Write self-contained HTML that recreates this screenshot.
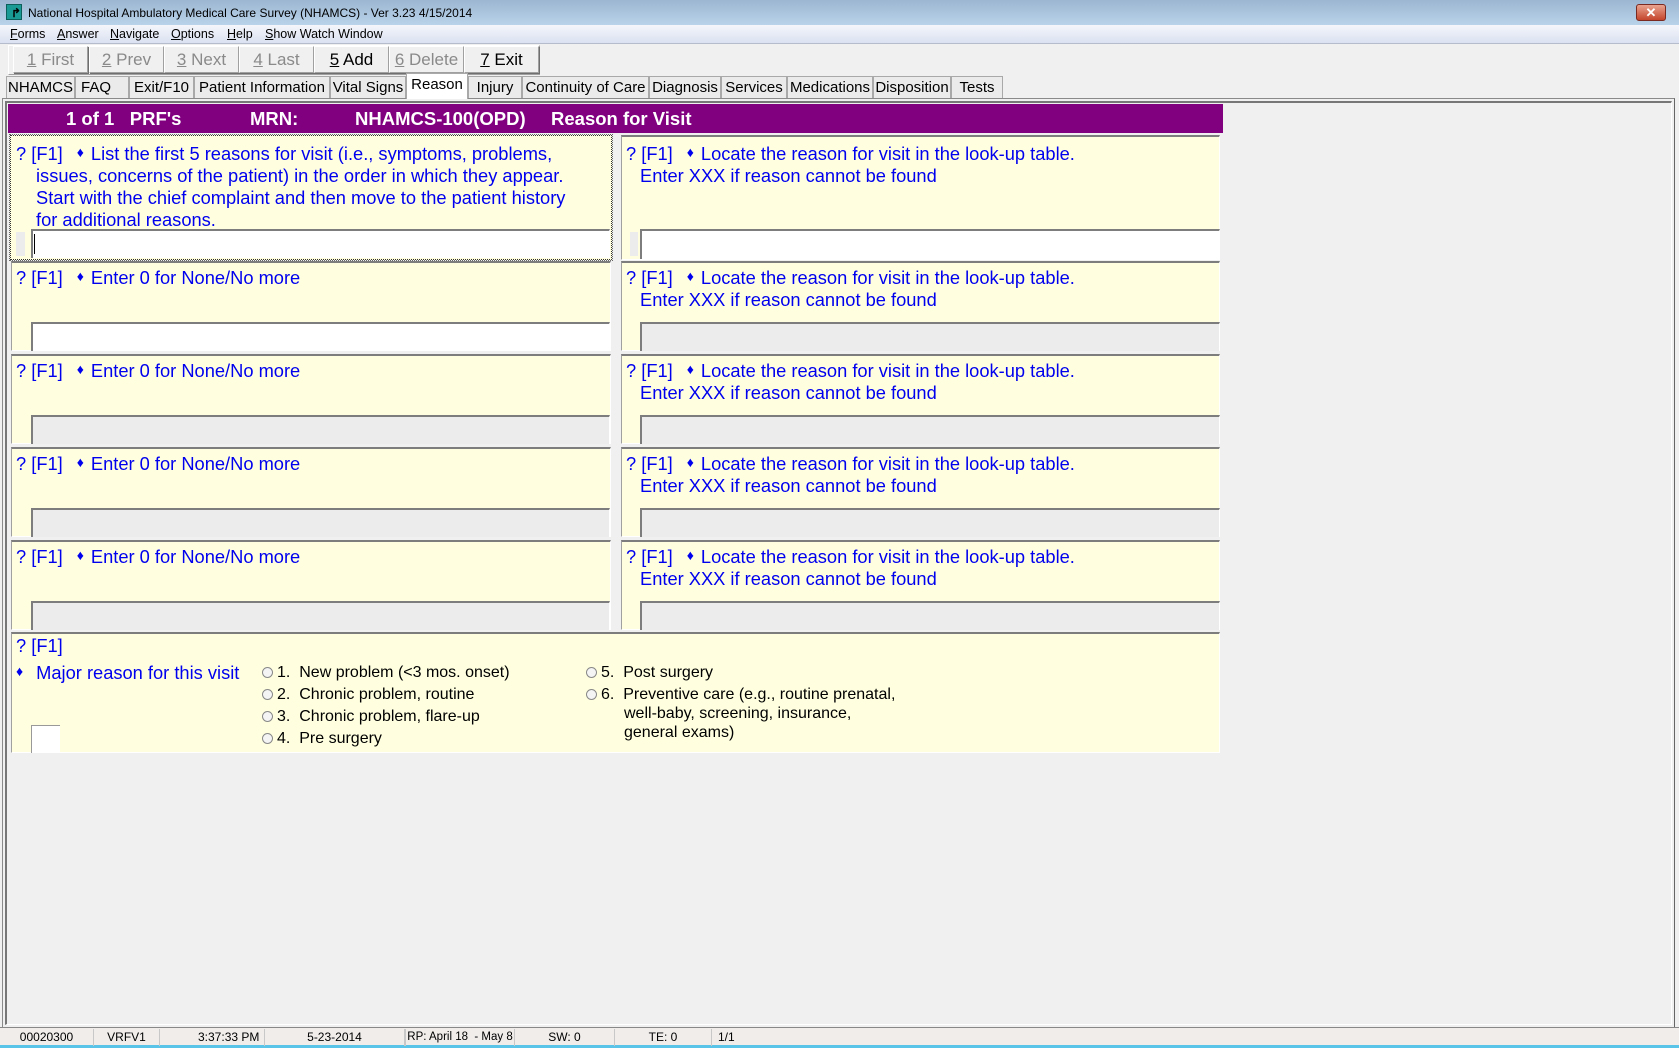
<!DOCTYPE html>
<html><head><meta charset="utf-8">
<style>
*{margin:0;padding:0;box-sizing:border-box}
body{width:1679px;height:1048px;background:#f0f0f0;position:relative;overflow:hidden;font-family:"Liberation Sans",Arial,sans-serif}
.a{position:absolute}
.title{left:0;top:0;width:1679px;height:25px;background:linear-gradient(#9cb6d2,#b9d3ea);font-size:12px;color:#000}
.menu{left:0;top:25px;width:1679px;height:19px;background:linear-gradient(#f4f6fb,#dbe1f1);border-bottom:1px solid #b5bccb;font-size:12.5px}
.menu span{position:absolute;top:2px}
.btn{top:46px;height:27px;border:1px solid #a0a0a0;border-top-color:#fff;border-left-color:#fff;background:#f0f0f0;font-size:17px;color:#8a8a8a;text-align:center;line-height:25px;box-shadow:1px 1px 0 #6f6f6f}
.btn.on{color:#000}
.tab{top:76px;height:22px;border:1px solid #a9a9a9;border-bottom:none;background:#ebebeb;font-size:15px;line-height:21px;text-align:center;color:#000}
.tab.sel{top:73px;height:26px;background:#fff;z-index:2}
.cell{background:#ffffe0;border-top:2px solid #7d7d7d;border-left:1px solid #a0a0a0;border-right:1px solid #fff;border-bottom:1px solid #fff}
.q{font-size:18.3px;color:#0000ee;line-height:22px;white-space:nowrap}
.d{font-size:14px;vertical-align:3px;margin:0 7px 0 14px}
.inp{background:#ececec;border-top:2px solid #7d7d7d;border-left:2px solid #7d7d7d;border-right:1px solid #fff}
.inp.w{background:#fff}
.opt{font-size:16px;color:#000;line-height:22px;white-space:nowrap}
.rad{display:inline-block;width:11px;height:11px;border:1px solid #888;border-radius:50%;background:#f4f4f4;margin-right:4px;vertical-align:-1px}
.st{top:1029px;height:17px;font-size:12px;line-height:17px;text-align:center;border-right:1px solid #c8c8c8;white-space:nowrap}
.ind{padding-left:20px}
.ind2{padding-left:14px}
</style></head><body>
<div class="a title">
 <div class="a" style="left:6px;top:4px;width:16px;height:16px;background:#1a9a94;border:1px solid #0c5f5a"><div class="a" style="left:4px;top:2px;color:#000;font-size:12px;font-weight:bold;line-height:12px">↱</div></div>
 <div class="a" style="left:28px;top:6px">National Hospital Ambulatory Medical Care Survey (NHAMCS) - Ver 3.23 4/15/2014</div>
 <div class="a" style="left:1636px;top:4px;width:30px;height:17px;border:1px solid #7a2a20;border-radius:3px;background:linear-gradient(#e9a38f,#c4452c);color:#fff;font-weight:bold;font-size:13px;text-align:center;line-height:15px">✕</div>
</div>
<div class="a menu">
 <span style="left:10px"><u>F</u>orms</span><span style="left:57px"><u>A</u>nswer</span><span style="left:110px"><u>N</u>avigate</span><span style="left:171px"><u>O</u>ptions</span><span style="left:227px"><u>H</u>elp</span><span style="left:265px"><u>S</u>how Watch Window</span>
</div>
<div class="a" style="left:8px;top:45px;width:532px;height:30px;border:1px solid #a0a0a0;border-top-color:#fff;border-left-color:#fff"></div>
<div class="a btn" style="left:13px;width:75px"><u>1</u> First</div>
<div class="a btn" style="left:89px;width:75px"><u>2</u> Prev</div>
<div class="a btn" style="left:164px;width:75px"><u>3</u> Next</div>
<div class="a btn" style="left:239px;width:75px"><u>4</u> Last</div>
<div class="a btn on" style="left:314px;width:75px"><u>5</u> Add</div>
<div class="a btn" style="left:389px;width:75px"><u>6</u> Delete</div>
<div class="a btn on" style="left:464px;width:75px"><u>7</u> Exit</div>

<div class="a tab" style="left:6px;width:69px">NHAMCS</div>
<div class="a tab" style="left:75px;width:54px;text-align:left;padding-left:5px">FAQ</div>
<div class="a tab" style="left:129px;width:65px">Exit/F10</div>
<div class="a tab" style="left:194px;width:136px">Patient Information</div>
<div class="a tab" style="left:330px;width:76px">Vital Signs</div>
<div class="a tab sel" style="left:406px;width:62px">Reason</div>
<div class="a tab" style="left:468px;width:54px">Injury</div>
<div class="a tab" style="left:522px;width:127px">Continuity of Care</div>
<div class="a tab" style="left:649px;width:72px">Diagnosis</div>
<div class="a tab" style="left:721px;width:66px">Services</div>
<div class="a tab" style="left:787px;width:86px">Medications</div>
<div class="a tab" style="left:873px;width:78px">Disposition</div>
<div class="a tab" style="left:951px;width:52px">Tests</div>

<div class="a" style="left:2px;top:98px;width:1673px;height:930px;border:1px solid #8a8a8a;border-right-color:#666;border-bottom-color:#666"></div>
<div class="a" style="left:5px;top:101px;width:1667px;height:924px;border:1px solid #fff;border-top:2px solid #777;border-left:2px solid #777"></div>
<div class="a" style="left:8px;top:104px;width:1215px;height:29px;background:#800080;color:#fff;font-weight:bold;font-size:18.5px;line-height:29px;white-space:pre"><span class="a" style="left:58px">1 of 1   PRF's</span><span class="a" style="left:242px">MRN:</span><span class="a" style="left:347px">NHAMCS-100(OPD)</span><span class="a" style="left:543px">Reason for Visit</span></div>

<!-- row 1 -->
<div class="a cell" style="left:10px;top:135px;width:602px;height:125px;border:1px dotted #333;outline:1px dotted #666"></div>
<div class="a q" style="left:16px;top:141px">? [F1]<span class="d">♦</span>List the first 5 reasons for visit (i.e., symptoms, problems,<br><span class="ind">issues, concerns of the patient) in the order in which they appear.</span><br><span class="ind">Start with the chief complaint and then move to the patient history</span><br><span class="ind">for additional reasons.</span></div>
<div class="a" style="left:16px;top:232px;width:9px;height:24px;background:#ececec"></div>
<div class="a inp w" style="left:31px;top:229px;width:579px;height:29px"></div>
<div class="a" style="left:34px;top:234px;width:1px;height:20px;background:#000"></div>
<div class="a cell" style="left:621px;top:135px;width:599px;height:125px"></div>
<div class="a q" style="left:626px;top:141px">? [F1]<span class="d">♦</span>Locate the reason for visit in the look-up table.<br><span class="ind2">Enter XXX if reason cannot be found</span></div>
<div class="a" style="left:630px;top:232px;width:8px;height:24px;background:#ececec"></div>
<div class="a inp w" style="left:640px;top:229px;width:580px;height:30px"></div>

<!-- rows 2-5 -->
<div class="a cell" style="left:11px;top:261px;width:600px;height:90px"></div>
<div class="a q" style="left:16px;top:265px">? [F1]<span class="d">♦</span>Enter 0 for None/No more</div>
<div class="a inp w" style="left:31px;top:322px;width:579px;height:29px"></div>
<div class="a cell" style="left:621px;top:261px;width:599px;height:90px"></div>
<div class="a q" style="left:626px;top:265px">? [F1]<span class="d">♦</span>Locate the reason for visit in the look-up table.<br><span class="ind2">Enter XXX if reason cannot be found</span></div>
<div class="a inp" style="left:640px;top:322px;width:580px;height:29px"></div>

<div class="a cell" style="left:11px;top:354px;width:600px;height:90px"></div>
<div class="a q" style="left:16px;top:358px">? [F1]<span class="d">♦</span>Enter 0 for None/No more</div>
<div class="a inp" style="left:31px;top:415px;width:579px;height:29px"></div>
<div class="a cell" style="left:621px;top:354px;width:599px;height:90px"></div>
<div class="a q" style="left:626px;top:358px">? [F1]<span class="d">♦</span>Locate the reason for visit in the look-up table.<br><span class="ind2">Enter XXX if reason cannot be found</span></div>
<div class="a inp" style="left:640px;top:415px;width:580px;height:29px"></div>

<div class="a cell" style="left:11px;top:447px;width:600px;height:90px"></div>
<div class="a q" style="left:16px;top:451px">? [F1]<span class="d">♦</span>Enter 0 for None/No more</div>
<div class="a inp" style="left:31px;top:508px;width:579px;height:29px"></div>
<div class="a cell" style="left:621px;top:447px;width:599px;height:90px"></div>
<div class="a q" style="left:626px;top:451px">? [F1]<span class="d">♦</span>Locate the reason for visit in the look-up table.<br><span class="ind2">Enter XXX if reason cannot be found</span></div>
<div class="a inp" style="left:640px;top:508px;width:580px;height:29px"></div>

<div class="a cell" style="left:11px;top:540px;width:600px;height:90px"></div>
<div class="a q" style="left:16px;top:544px">? [F1]<span class="d">♦</span>Enter 0 for None/No more</div>
<div class="a inp" style="left:31px;top:601px;width:579px;height:29px"></div>
<div class="a cell" style="left:621px;top:540px;width:599px;height:90px"></div>
<div class="a q" style="left:626px;top:544px">? [F1]<span class="d">♦</span>Locate the reason for visit in the look-up table.<br><span class="ind2">Enter XXX if reason cannot be found</span></div>
<div class="a inp" style="left:640px;top:601px;width:580px;height:29px"></div>

<!-- row 6 -->
<div class="a cell" style="left:11px;top:632px;width:1209px;height:121px"></div>
<div class="a q" style="left:16px;top:635px">? [F1]</div>
<div class="a q" style="left:14px;top:660px"><span class="d" style="margin:0 13px 0 2px">♦</span>Major reason for this visit</div>
<div class="a" style="left:31px;top:725px;width:29px;height:28px;background:#fff;border-top:1px solid #999;border-left:1px solid #999"></div>
<div class="a opt" style="left:262px;top:662px"><span class="rad"></span>1.&nbsp; New problem (&lt;3 mos. onset)<br><span class="rad"></span>2.&nbsp; Chronic problem, routine<br><span class="rad"></span>3.&nbsp; Chronic problem, flare-up<br><span class="rad"></span>4.&nbsp; Pre surgery</div>
<div class="a opt" style="left:586px;top:662px"><span class="rad"></span>5.&nbsp; Post surgery<br><span class="rad"></span>6.&nbsp; Preventive care (e.g., routine prenatal,</div>
<div class="a opt" style="left:624px;top:704px;line-height:19px">well-baby, screening, insurance,<br>general exams)</div>

<!-- status bar -->
<div class="a" style="left:0;top:1027px;width:1679px;height:21px;background:#f0edeb;border-top:1px solid #888"></div>
<div class="a" style="left:0;top:1045px;width:1679px;height:3px;background:#5ac3e8"></div>
<div class="a st" style="left:0;width:94px">00020300</div>
<div class="a st" style="left:94px;width:66px">VRFV1</div>
<div class="a st" style="left:160px;width:105px;text-align:left;padding-left:38px">3:37:33 PM</div>
<div class="a st" style="left:265px;width:140px">5-23-2014</div>
<div class="a st" style="left:405px;width:110px;border-left:1px solid #c8c8c8;font-size:11.5px">RP: April 18 &nbsp;- May 8</div>
<div class="a st" style="left:515px;width:100px">SW: 0</div>
<div class="a st" style="left:615px;width:97px">TE: 0</div>
<div class="a st" style="left:712px;width:60px;text-align:left;padding-left:6px;border:none">1/1</div>
</body></html>
